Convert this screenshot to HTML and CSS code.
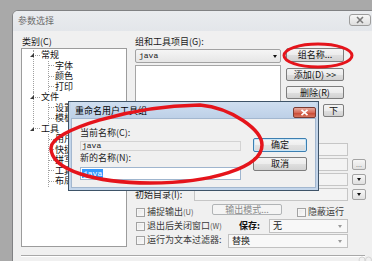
FILE: index.html
```html
<!DOCTYPE html>
<html lang="zh-CN">
<head>
<meta charset="utf-8">
<title>参数选择</title>
<link rel="stylesheet" href="styles.css">
</head>
<body>
<div class="desktop">
  <div class="main-win">
    <div class="titlebar">
      <span class="title">参数选择</span>
      <span class="win-close"><svg width="10" height="8" viewBox="0 0 10 8"><path d="M2 1 L8 7 M8 1 L2 7" stroke="#7a7a7a" stroke-width="1.6" fill="none"/></svg></span>
    </div>
    <div class="client">
      <div class="columns">
        <div class="col-left">
          <div class="lbl cat">类别(C)</div>
          <div class="tree">
            <ul class="root">
              <li class="node">
                <div class="row"><i class="exp"></i><i class="dash"></i><span>常规</span></div>
                <ul class="kids">
                  <li><i class="dash"></i><span>字体</span></li>
                  <li><i class="dash"></i><span>颜色</span></li>
                  <li><i class="dash"></i><span>打印</span></li>
                </ul>
              </li>
              <li class="node">
                <div class="row"><i class="exp"></i><i class="dash"></i><span>文件</span></div>
                <ul class="kids">
                  <li><i class="dash"></i><span>设置</span></li>
                  <li><i class="dash"></i><span>模板</span></li>
                </ul>
              </li>
              <li class="node last">
                <div class="row"><i class="exp"></i><i class="dash"></i><span>工具</span></div>
                <ul class="kids">
                  <li><i class="dash"></i><span>用户</span></li>
                  <li><i class="dash"></i><span>快捷</span></li>
                  <li><i class="dash"></i><span>拼写</span></li>
                  <li><i class="dash"></i><span>工具</span></li>
                  <li><i class="dash"></i><span>布局</span></li>
                </ul>
              </li>
            </ul>
          </div>
        </div>
        <div class="col-right">
          <div class="lbl">组和工具项目(G):</div>
          <div class="grp-row">
            <div class="combo"><span class="mono">java</span><i class="arrow"></i></div>
            <div class="btn grp-btn">组名称...</div>
          </div>
          <div class="list-row">
            <div class="listbox"></div>
            <div class="btn-col">
              <div class="btn">添加(D) &gt;&gt;</div>
              <div class="btn">删除(R)</div>
              <div class="updown"><div class="btn small"></div><div class="btn small">下</div></div>
            </div>
          </div>
          <div class="fields">
            <div class="frow"><span class="flbl"></span><span class="field"></span></div>
            <div class="frow"><span class="flbl"></span><span class="field"></span><span class="mini dots">...</span></div>
            <div class="frow"><span class="flbl"></span><span class="field"></span><span class="mini"><i class="arrow"></i></span></div>
            <div class="frow"><span class="flbl">初始目录(I):</span><span class="field"></span><span class="mini"><i class="arrow"></i></span></div>
          </div>
          <div class="opts">
            <div class="orow row-a">
              <label class="cb w77"><i class="box"></i><span>捕捉输出<small>(U)</small></span></label>
              <div class="btn disabled out-btn">输出模式...</div>
              <label class="cb hide-run"><i class="box"></i><span>隐蔽运行</span></label>
            </div>
            <div class="orow row-b">
              <label class="cb w104"><i class="box"></i><span>退出后关闭窗口<small>(W)</small></span></label>
              <span class="save">保存:</span>
              <div class="drop w79"><span>无</span><i class="arrow gray"></i></div>
            </div>
            <div class="orow row-c">
              <label class="cb w93"><i class="box"></i><span>运行为文本过滤器:</span></label>
              <div class="drop w120"><span>替换</span><i class="arrow gray"></i></div>
            </div>
          </div>
        </div>
      </div>
      <div class="sep"></div>
    </div>
  </div>

  <div class="dialog">
    <div class="dlg-title">
      <span>重命名用户工具组</span>
      <span class="dlg-close"><svg width="9" height="7" viewBox="0 0 9 7"><path d="M1.5 0.8 L7.5 6.2 M7.5 0.8 L1.5 6.2" stroke="#fff" stroke-width="1.7" fill="none"/></svg></span>
    </div>
    <div class="dlg-body">
      <div class="dlg-left">
        <div class="lbl">当前名称(C):</div>
        <div class="ro-field"><span class="mono">java</span></div>
        <div class="lbl second">新的名称(N):</div>
        <div class="edit"><span class="sel mono">java</span></div>
      </div>
      <div class="dlg-right">
        <div class="btn default">确定</div>
        <div class="btn">取消</div>
      </div>
    </div>
  </div>

  <svg class="marks" width="372" height="261" viewBox="0 0 372 261">
    <ellipse cx="318" cy="55.5" rx="34" ry="11.5" fill="none" stroke="#e5141b" stroke-width="3"/>
    <path d="M51,148 C51,130 130,106 200,105 C232,108 262,130 262,145 C262,168 210,183 150,183 C95,183 51,170 51,148 Z" fill="none" stroke="#e5141b" stroke-width="3.5"/>
    <g fill="none" stroke="#d4d4d4" stroke-width="1"><circle cx="362" cy="260" r="3"/><circle cx="368.5" cy="260" r="3"/></g>
  </svg>
</div>
</body>
</html>
```

FILE: styles.css
```css
* { box-sizing: border-box; margin: 0; padding: 0; }
html, body { width: 372px; height: 261px; overflow: hidden; }
body {
  background: #a9a9a9;
  font-family: "Noto Sans CJK SC", "Liberation Sans", sans-serif;
  font-size: 9px;
  line-height: 10px;
  color: #1a1a1a;
}
i { display: block; font-style: normal; }
ul { list-style: none; }
small { font-size: 7.5px; color: #555; }
.mono { font-family: "Liberation Mono", monospace; font-size: 8px; }

.desktop { position: relative; width: 372px; height: 261px; overflow: hidden; }

/* main window */
.main-win {
  position: absolute; left: 12px; top: 10px;
  width: 365px; height: 262px;
  border: 1px solid #808183;
  border-radius: 6px 6px 0 0;
  background: #f0f0f0;
  display: flex; flex-direction: column;
}
.titlebar {
  height: 20px; flex: none;
  display: flex; align-items: center;
  padding-left: 5px; padding-bottom: 1px;
  background: linear-gradient(#eaecef, #e3e6ea);
  border-radius: 5px 5px 0 0;
}
.title { color: #6e6e6e; }
.win-close {
  margin-left: auto; margin-right: 5px;
  align-self: flex-start; margin-top: 3px;
  width: 22px; height: 12px;
  border: 1px solid #9d9d9d; border-radius: 3px;
  background: linear-gradient(#f7f7f7, #dedede);
  display: flex; align-items: center; justify-content: center;
}
.client { padding: 6px 0 0 8px; display: flex; flex-direction: column; }
.columns { display: flex; gap: 8px; }
.lbl { height: 10px; white-space: nowrap; }
.col-left { width: 106px; display: flex; flex-direction: column; }
.cat { margin-left: 1px; }

/* tree */
.tree {
  margin-top: 1px; height: 199px;
  border: 1px solid #9c9c9c; background: #fff;
  padding-top: 1px; overflow: hidden;
  white-space: nowrap; color: #111;
}
.root { margin-left: 11px; }
.node { border-left: 1px dotted #a0a0a0; }
.node.last { border-left-color: transparent; }
.row, .kids li { height: 10.5px; display: flex; align-items: center; }
.row { margin-left: -4px; }
.exp {
  width: 0; height: 0;
  border-style: solid; border-width: 0 0 4px 4px;
  border-color: transparent transparent #3a3a3a transparent;
}
.dash { width: 5px; height: 0; border-top: 1px dotted #a0a0a0; }
.row .dash { margin-left: 1px; margin-right: 1px; }
.kids { margin-left: 14px; border-left: 1px dotted #a0a0a0; }
.kids .dash { margin-right: 1px; }

/* right column */
.col-right { width: 231px; display: flex; flex-direction: column; }
.grp-row { display: flex; gap: 5px; margin-top: 1px; align-items: flex-start; }
.combo {
  width: 146px; height: 14px; margin-top: 1px;
  border: 1px solid #a2a2a2; border-radius: 2px;
  background: linear-gradient(#f5f5f5, #e6e6e6);
  display: flex; align-items: center; padding-left: 3px;
}
.combo .arrow { margin-left: auto; margin-right: 3px; }
.arrow {
  width: 0; height: 0;
  border-style: solid; border-width: 3px 2.5px 0 2.5px;
  border-color: #111 transparent transparent transparent;
}
.arrow.gray { border-top-color: #9a9a9a; }

.btn {
  height: 13px;
  border: 1px solid #7d7d7d; border-radius: 2px;
  background: linear-gradient(#f4f4f4 0%, #ececec 50%, #dfdfdf 51%, #d2d2d2 100%);
  display: flex; align-items: center; justify-content: center;
  white-space: nowrap; color: #111;
}
.grp-btn { width: 58px; height: 14px; }
.list-row { display: flex; gap: 5px; margin-top: 2px; }
.listbox { width: 146px; height: 74px; border: 1px solid #a6a6a6; background: #fff; }
.btn-col { width: 58px; padding-top: 3px; display: flex; flex-direction: column; gap: 5px; }
.updown { display: flex; justify-content: space-between; }
.btn.small { width: 21px; }

.fields { margin-top: 4px; display: flex; flex-direction: column; gap: 2px; }
.frow { height: 13px; display: flex; align-items: center; }
.flbl { width: 59px; white-space: nowrap; }
.field { width: 154px; height: 13px; border: 1px solid #c6c6c6; background: #f3f3f3; }
.mini {
  margin-left: 4px; width: 14px; height: 11px;
  border: 1px solid #a3a3a3; border-radius: 2px;
  background: linear-gradient(#f6f6f6, #e0e0e0);
  display: flex; align-items: center; justify-content: center;
}
.mini.dots { color: #8a8a8a; font-size: 7px; line-height: 6px; align-items: flex-end; padding-bottom: 2px; }

.opts { margin-top: 3px; display: flex; flex-direction: column; }
.orow { display: flex; align-items: flex-start; }
.row-a { height: 13px; }
.row-b { height: 14px; margin-top: 2px; }
.row-c { height: 14px; margin-top: 1px; }
.cb { display: flex; align-items: center; height: 10px; white-space: nowrap; color: #3a3a3a; }
.row-a .cb { margin-top: 3px; }
.row-b .cb, .row-b .save { margin-top: 2px; }
.row-c .cb { margin-top: 1px; }
.box {
  width: 9px; height: 9px; margin-left: 1px; margin-right: 2px;
  border: 1px solid #a2a2a2;
  background: linear-gradient(135deg, #e6e6e6, #fbfbfb);
  box-shadow: inset 0 0 0 1px #f6f6f6;
}
.w77 { width: 77px; }
.w104 { width: 104px; }
.w93 { width: 93px; }
.out-btn { width: 70px; height: 11px; }
.btn.disabled { border-color: #b1b4b6; background: #f4f4f4; color: #8a8a8a; }
.hide-run { margin-left: 14px; }
.save { width: 30px; height: 10px; font-weight: bold; color: #111; }
.drop {
  height: 14px; border: 1px solid #c1c1c1; background: #f8f8f8;
  display: flex; align-items: center; padding-left: 3px; color: #222;
}
.drop .arrow { margin-left: auto; margin-right: 5px; }
.w79 { width: 79px; }
.w120 { width: 120px; }

.sep { margin-top: 7px; margin-right: 11px; height: 2px; border-top: 1px solid #a8a8a8; border-bottom: 1px solid #ffffff; }

/* rename dialog */
.dialog {
  position: absolute; left: 68px; top: 101px;
  width: 251px; height: 90px;
  border: 1px solid #3e5368;
  background: #c3d5ea;
  padding: 0 2px 2px;
  display: flex; flex-direction: column;
}
.dlg-title {
  height: 16px; flex: none;
  display: flex; align-items: center;
  padding-left: 4px; padding-top: 1px;
  background: linear-gradient(#cfdef0, #bdd0e7);
  color: #000;
}
.dlg-close {
  margin-left: auto; align-self: flex-start; margin-top: 4px;
  width: 23px; height: 11px;
  border: 1px solid #7b3a31; border-radius: 2px;
  background: linear-gradient(#e8ab9f 0%, #d76a57 50%, #c7452f 51%, #d8755f 100%);
  display: flex; align-items: center; justify-content: center;
}
.dlg-body {
  flex: 1;
  background: #f0f0f0;
  border: 1px solid #a3b7cf;
  display: flex; gap: 12px;
  padding: 9px 0 0 8px;
}
.dlg-left { width: 161px; display: flex; flex-direction: column; }
.ro-field {
  margin-top: 3px; height: 10px;
  border: 1px solid #d3d3d3; background: #f0f0f0;
  padding-left: 1px; display: flex; align-items: center; color: #222;
}
.lbl.second { margin-top: 2px; }
.edit {
  margin-top: 4px; height: 13px;
  border: 1px solid #9fb5ce; background: #fff;
  padding-left: 1px; display: flex; align-items: center;
}
.sel { background: #3399ff; color: #fff; height: 9px; line-height: 9px; padding: 0 1px; }
.dlg-right { width: 54px; margin-top: 10px; display: flex; flex-direction: column; gap: 5px; }
.dlg-right .btn { height: 14px; }
.btn.default {
  border-color: #3c7fb1;
  box-shadow: inset 0 0 0 1px #cbe6f7;
  background: linear-gradient(#f6f6f6 0%, #eeeeee 50%, #e2e2e2 51%, #d8d8d8 100%);
}

.marks { position: absolute; left: 0; top: 0; pointer-events: none; }
```
